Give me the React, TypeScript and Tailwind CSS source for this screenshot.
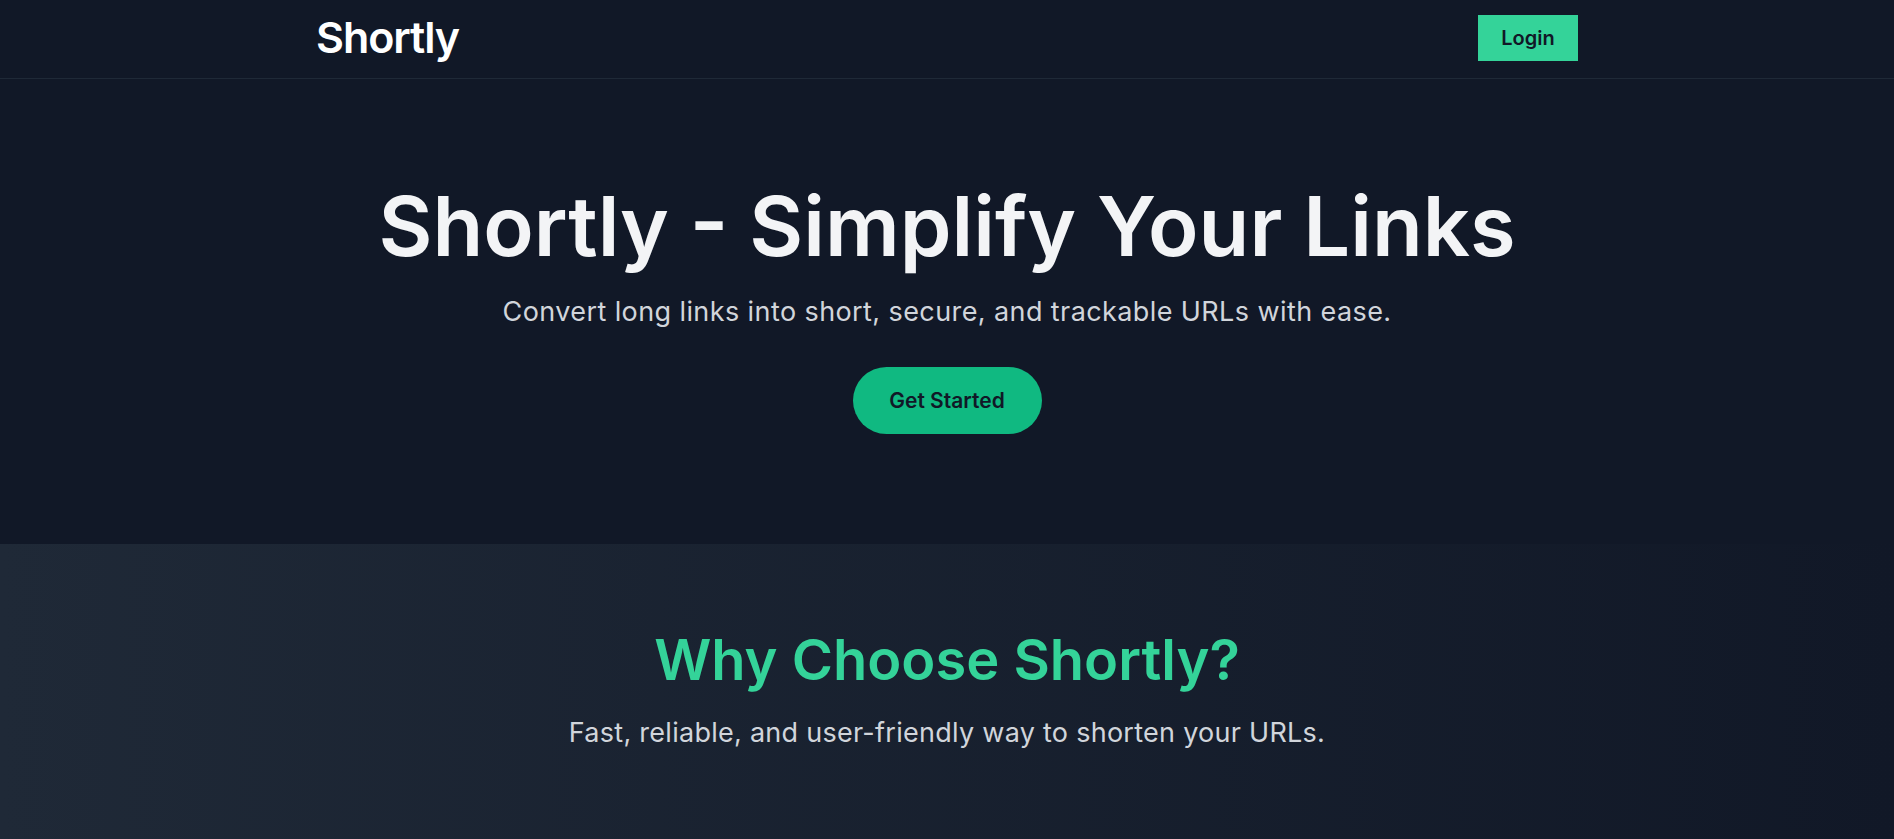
import React from 'react';

const font = { fontFamily: 'Inter, "Open Sans", sans-serif' };

const Header = () => (
  <header className="h-[79px] border-b border-[#1f2937] bg-[#111827]">
    <div className="mx-auto flex h-full w-[1262px] items-center justify-between pb-[3px]">
      <a href="#" className="text-[43px] font-semibold leading-none tracking-tight text-white">
        Shortly
      </a>
      <button className="h-[46px] w-[100px] bg-[#34d399] text-[20px] font-semibold text-[#111827]">
        Login
      </button>
    </div>
  </header>
);

const Hero = () => (
  <section className="flex flex-col items-center bg-[#111827] pb-[110px] pt-[98px] text-center">
    <h1 className="text-[83px] font-semibold leading-[1.2] text-[#f3f4f6]">
      Shortly - Simplify Your Links
    </h1>
    <p className="mt-[16px] text-[27px] leading-[1.4] tracking-[0.015em] text-[#d1d5db]">
      Convert long links into short, secure, and trackable URLs with ease.
    </p>
    <button className="mt-[37px] h-[67px] w-[189px] rounded-full bg-[#10b981] text-[21px] font-semibold text-[#111827]">
      Get Started
    </button>
  </section>
);

const Features = () => (
  <section className="flex flex-col items-center bg-gradient-to-r from-[#1f2937] to-[#111827] pb-[120px] pt-[83px] text-center">
    <h2 className="text-[56px] font-semibold leading-[1.2] text-[#34d399]">Why Choose Shortly?</h2>
    <p className="mt-[19px] text-[27px] leading-[1.4] tracking-[0.01em] text-[#d1d5db]">
      Fast, reliable, and user-friendly way to shorten your URLs.
    </p>
  </section>
);

export default function App() {
  return (
    <div className="min-h-screen bg-[#111827]" style={font}>
      <Header />
      <Hero />
      <Features />
    </div>
  );
}
